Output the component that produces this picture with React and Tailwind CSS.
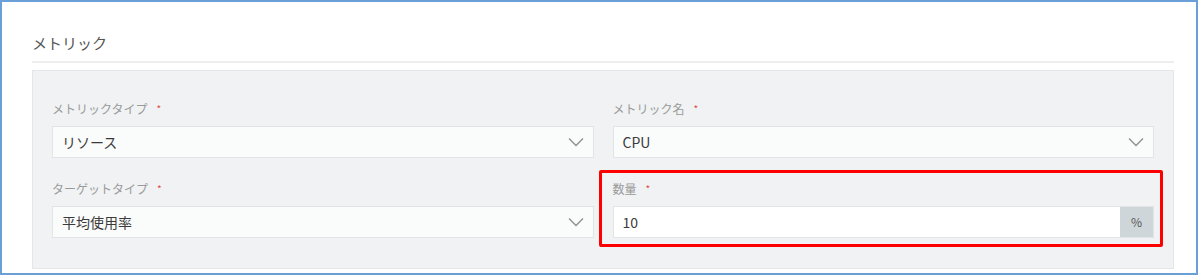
import React from 'react';

const font = { fontFamily: '"Noto Sans CJK JP", "Noto Sans", sans-serif' };

function Chevron() {
  return (
    <svg width="16" height="10" viewBox="0 0 16 10" className="shrink-0">
      <polyline points="1,1.5 8,8.5 15,1.5" fill="none" stroke="#8c8f91" strokeWidth="1.3" />
    </svg>
  );
}

function Label({ children }) {
  return (
    <div className="h-[16px] flex items-center gap-[9px] text-[12px] leading-[16px] text-[#9a9a9a] mb-[9px]">
      <span>{children}</span>
      <span className="text-[#e84a4a] text-[10px]">*</span>
    </div>
  );
}

function Select({ label, value }) {
  return (
    <div>
      <Label>{label}</Label>
      <div className="h-[32px] bg-[#fafbfb] border border-[#e1e5e7] flex items-center justify-between pl-[9px] pr-[9px]">
        <span className="text-[14px] text-[#3a3a3a]">{value}</span>
        <Chevron />
      </div>
    </div>
  );
}

export default function App() {
  return (
    <div className="w-[1198px] h-[275px] border-2 border-[#6a9fd8] bg-white pl-[30px] pr-[22px] pt-[31px]" style={font}>
      <div className="h-[20px] text-[15px] leading-[20px] text-[#555]">メトリック</div>
      <div className="mt-[8px] h-[2px] bg-[#eceeef]" />
      <div className="mt-[7px] h-[199px] bg-[#f0f2f3] border border-[#e3e7e9] px-[19px] pt-[30px]">
        <div className="grid grid-cols-2 gap-x-[19px] gap-y-[23px]">
          <Select label="メトリックタイプ" value="リソース" />
          <Select label="メトリック名" value="CPU" />
          <Select label="ターゲットタイプ" value="平均使用率" />
          <div className="relative">
            <Label>数量</Label>
            <div className="h-[32px] bg-white border border-[#e1e5e7] flex">
              <div className="flex-1 flex items-center pl-[9px] text-[14px] text-[#3a3a3a]">10</div>
              <div className="w-[33px] bg-[#cfd6d9] flex items-center justify-center text-[12px] text-[#555]">%</div>
            </div>
            <div className="absolute -left-[14px] -top-[11px] -right-[9px] -bottom-[9px] border-[3px] border-[#ff0000] rounded-[2px]" />
          </div>
        </div>
      </div>
    </div>
  );
}
